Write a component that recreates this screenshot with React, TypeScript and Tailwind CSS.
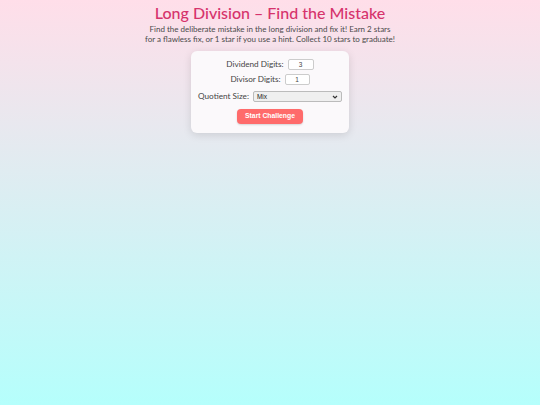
import React from "react";

export default function App() {
  return (
    <div
      className="min-h-[405px] w-full bg-[linear-gradient(to_bottom,#ffdee9,#b5fffc)] flex flex-col items-center"
      style={{ fontFamily: "Lato, 'Noto Sans', sans-serif" }}
    >
      <h1 className="mt-[3px] text-[16px] leading-[20px] font-medium text-[#d6336c]">
        Long Division – Find the Mistake
      </h1>
      <p className="mt-[1px] text-[8px] leading-[10px] text-[#4a4a4a] text-center whitespace-nowrap">
        Find the deliberate mistake in the long division and fix it! Earn 2 stars
        <br />
        for a flawless fix, or 1 star if you use a hint. Collect 10 stars to graduate!
      </p>
      <div className="mt-[7px] w-[158px] bg-[#fbf9fb] rounded-[6px] shadow-[0_2px_8px_rgba(0,0,0,0.12)] flex flex-col items-center pt-[8px] pb-[9px] text-[8.2px] text-[#444]">
        <div className="flex items-center gap-[4px] h-[11px]">
          <span>Dividend Digits:</span>
          <div className="w-[26px] h-[11px] border border-[#ccc] rounded-[2px] bg-white text-[6.5px] flex items-center justify-center" style={{ fontFamily: "'Liberation Sans', sans-serif" }}>3</div>
        </div>
        <div className="flex items-center gap-[4px] h-[11px] mt-[4px]">
          <span>Divisor Digits:</span>
          <div className="w-[25px] h-[11px] border border-[#ccc] rounded-[2px] bg-white text-[6.5px] flex items-center justify-center" style={{ fontFamily: "'Liberation Sans', sans-serif" }}>1</div>
        </div>
        <div className="flex items-center gap-[4px] h-[11px] mt-[6px]">
          <span>Quotient Size:</span>
          <div className="w-[89px] h-[11px] border border-[#bbb] rounded-[2px] bg-[#efefef] text-[6.5px] flex items-center justify-between px-[3px] text-[#222]" style={{ fontFamily: "'Liberation Sans', sans-serif" }}>
            <span>Mix</span>
            <svg width="6" height="4" viewBox="0 0 6 4"><path d="M1 1 L3 3 L5 1" stroke="#333" strokeWidth="1.2" fill="none" /></svg>
          </div>
        </div>
        <div className="mt-[7px] w-[66px] h-[15px] rounded-[4px] bg-[#ff6b6b] text-white font-bold text-[6.8px] flex items-center justify-center shadow-[0_1px_2px_rgba(0,0,0,0.15)]" style={{ fontFamily: "'Liberation Sans', sans-serif" }}>
          Start Challenge
        </div>
      </div>
    </div>
  );
}
